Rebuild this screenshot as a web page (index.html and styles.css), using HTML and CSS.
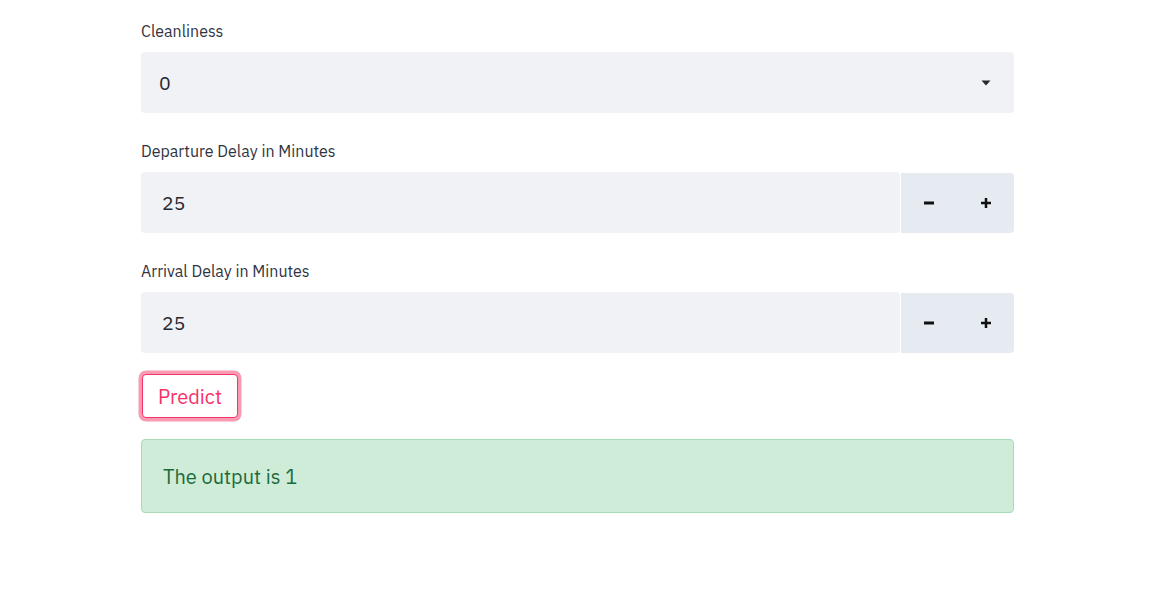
FILE: index.html
```html
<!DOCTYPE html>
<html>
<head>
<meta charset="utf-8">
<link rel="stylesheet" href="styles.css">
</head>
<body>
<main class="main">
  <div class="widget">
    <label class="label">Cleanliness</label>
    <div class="select">
      <span class="value">0</span>
      <svg class="caret" width="10" height="6" viewBox="0 0 10 6"><path d="M0.5 0.5 H9.5 L5 5.5 Z" fill="#262730"/></svg>
    </div>
  </div>
  <div class="widget">
    <label class="label">Departure Delay in Minutes</label>
    <div class="number">
      <div class="field"><span class="value">25</span></div>
      <div class="steps">
        <button class="step"><svg width="12" height="12" viewBox="0 0 12 12"><rect x="1" y="4.5" width="10" height="3" fill="#111"/></svg></button>
        <button class="step"><svg width="12" height="12" viewBox="0 0 12 12"><rect x="1" y="4.75" width="10" height="2.5" fill="#111"/><rect x="4.75" y="1" width="2.5" height="10" fill="#111"/></svg></button>
      </div>
    </div>
  </div>
  <div class="widget">
    <label class="label">Arrival Delay in Minutes</label>
    <div class="number">
      <div class="field"><span class="value">25</span></div>
      <div class="steps">
        <button class="step"><svg width="12" height="12" viewBox="0 0 12 12"><rect x="1" y="4.5" width="10" height="3" fill="#111"/></svg></button>
        <button class="step"><svg width="12" height="12" viewBox="0 0 12 12"><rect x="1" y="4.75" width="10" height="2.5" fill="#111"/><rect x="4.75" y="1" width="2.5" height="10" fill="#111"/></svg></button>
      </div>
    </div>
  </div>
  <div class="button-row">
    <button class="predict">Predict</button>
  </div>
  <div class="alert">The output is 1</div>
</main>
</body>
</html>
```

FILE: styles.css
```css
* { box-sizing: border-box; }
body {
  margin: 0;
  background: #ffffff;
  font-family: "IBM Plex Sans", "Noto Sans", "Open Sans", sans-serif;
  color: #262730;
}
.main {
  width: 873px;
  margin-left: 141px;
  padding-top: 19px;
  display: flex;
  flex-direction: column;
}
.widget {
  display: flex;
  flex-direction: column;
  margin-bottom: 26px;
}
.widget:nth-child(3) { margin-bottom: 21px; }
.label {
  font-size: 16px;
  line-height: 24px;
  height: 24px;
  margin-bottom: 9px;
  color: #31333f;
}
.select {
  height: 61px;
  background: #f0f2f6;
  border-radius: 4px;
  display: flex;
  align-items: center;
  justify-content: space-between;
  padding: 0 23px 0 18px;
}
.value {
  font-size: 19.5px;
  color: #262730;
}
.caret { margin-top: 1px; }
.number {
  height: 61px;
  display: flex;
}
.field {
  flex: 1;
  background: #f0f2f6;
  border-radius: 4px;
  display: flex;
  align-items: center;
  padding-left: 21px;
}
.steps {
  width: 113px;
  margin-left: 1px;
  margin-top: 1px;
  background: #e6eaf1;
  border-radius: 0 4px 4px 0;
  display: flex;
}
.step {
  flex: 1;
  border: 0;
  background: transparent;
  padding: 0;
  display: flex;
  align-items: center;
  justify-content: center;
}
.button-row {
  display: flex;
  margin-bottom: 21px;
}
.predict {
  margin-left: 1px;
  width: 96px;
  height: 44px;
  border: 1px solid #f63366;
  border-radius: 4px;
  background: #fff;
  color: #f63366;
  font-family: inherit;
  font-size: 20px;
  box-shadow: 0 0 0 3.5px rgba(246, 51, 102, 0.5);
  padding: 0;
}
.alert {
  height: 74px;
  background: #cfecd8;
  border: 1px solid #a8dcb6;
  border-radius: 4px;
  color: #1c6a3a;
  font-size: 20px;
  display: flex;
  align-items: center;
  padding-left: 21px;
}
```
